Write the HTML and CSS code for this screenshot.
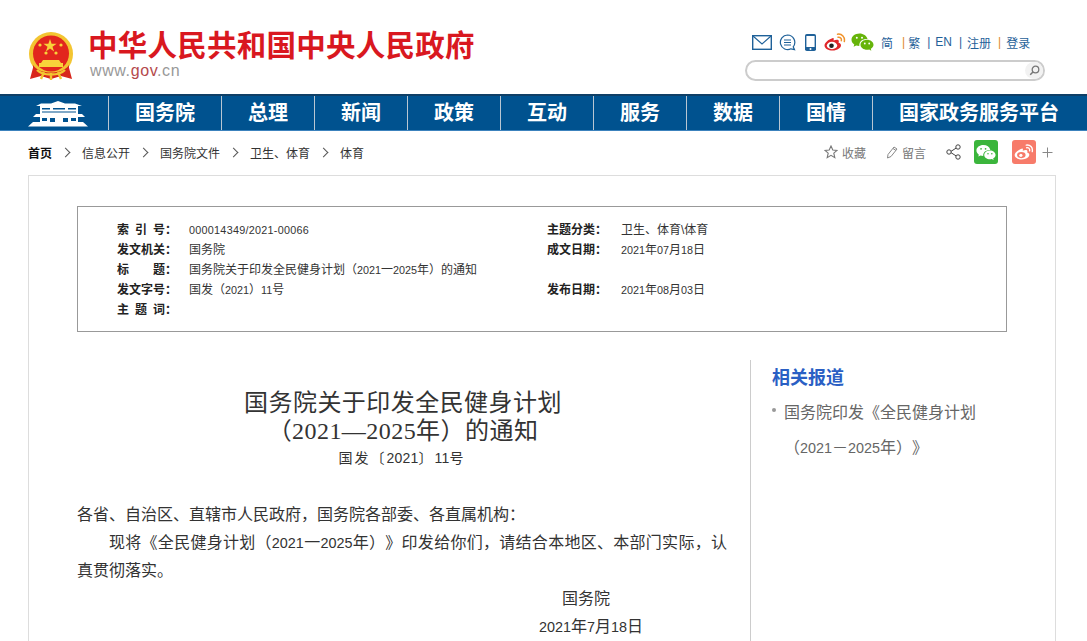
FILE: index.html
```html
<!DOCTYPE html>
<html lang="zh-CN">
<head>
  <meta charset="UTF-8">
  <title>国务院关于印发全民健身计划（2021—2025年）的通知</title>
  <link rel="stylesheet" href="styles.css">
</head>
<body>
  <div class="header">
    <div class="brand">
      <svg class="emblem" width="44" height="48" viewBox="0 0 44 48">
        <path d="M5 32 L1 47 L12 44 L22 47 L32 44 L43 47 L39 32 Z" fill="#d8261c"/>
        <circle cx="22" cy="22" r="22" fill="#f3c531"/>
        <circle cx="22" cy="21.5" r="18" fill="#e2261d"/>
        <polygon points="21,7 22.6,11.8 27.6,11.8 23.5,14.8 25.1,19.6 21,16.6 16.9,19.6 18.5,14.8 14.4,11.8 19.4,11.8" fill="#f8d33a"/>
        <circle cx="11" cy="13" r="1.6" fill="#f8d33a"/>
        <circle cx="32" cy="13" r="1.6" fill="#f8d33a"/>
        <circle cx="17" cy="21" r="1.6" fill="#f8d33a"/>
        <circle cx="27" cy="21" r="1.6" fill="#f8d33a"/>
        <path d="M14 28 L30 28 L32 31 L34 31 L34 35 L10 35 L10 31 L12 31 Z" fill="#f8d33a"/>
        <path d="M4 33 C10 43 34 43 40 33 L40 40 C32 47 12 47 4 40 Z" fill="#d8261c"/>
        <path d="M8 38 C14 44 30 44 36 38 M12 47 L15 40 M32 47 L29 40 M22 41 L22 48" stroke="#f3c531" stroke-width="2.4" fill="none"/>
      </svg>
      <div class="brand-text">
        <div class="site-name">中华人民共和国中央人民政府</div>
        <div class="site-url">www.<span class="url-red">gov</span>.cn</div>
      </div>
    </div>
    <div class="tools">
      <div class="tool-row">
        <svg class="icon-mail" width="20" height="15" viewBox="0 0 20 15">
          <rect x="0.7" y="0.7" width="18.6" height="13.6" fill="#fff" stroke="#1f6199" stroke-width="1.4"/>
          <path d="M1 1 L10 9 L19 1" fill="none" stroke="#1f6199" stroke-width="1.1"/>
        </svg>
        <svg class="icon-msg" width="17" height="17" viewBox="0 0 17 17">
          <path d="M8.5 1 A7.3 7.3 0 1 0 12 14.8 L15.5 15.6 L14.2 12.8 A7.3 7.3 0 0 0 8.5 1 Z" fill="none" stroke="#1f6199" stroke-width="1.2"/>
          <path d="M5 6 H12 M5 8.5 H12 M5 11 H12" stroke="#1f6199" stroke-width="1"/>
        </svg>
        <svg class="icon-phone" width="11" height="17" viewBox="0 0 11 17">
          <rect x="0" y="0" width="11" height="17" rx="1.8" fill="#1f6199"/>
          <rect x="1.4" y="2" width="8.2" height="11" fill="#fff"/>
          <circle cx="5.5" cy="15" r="1" fill="#fff"/>
        </svg>
        <svg class="icon-weibo" width="22" height="18" viewBox="0 0 22 18">
          <path d="M9 5 C4 6.500 0.500 10 0.500 12.500 C0.500 15.500 4.500 17.500 8.500 17.500 C13.500 17.500 17 14.800 17 12.200 C17 10.500 15.500 10 14.500 9.700 C15 8.500 15 7.400 14.200 6.900 C13 6.300 11 7 9.500 7.600 C10 6 9.800 4.800 9 5 Z" fill="#e0262a"/>
          <ellipse cx="8" cy="12.500" rx="5.200" ry="3.700" fill="#fff"/>
          <circle cx="7.500" cy="12.700" r="2.300" fill="#222"/>
          <path d="M13.500 1.200 C18 0.500 21.200 4 20.300 8.500 M14 4.200 C16.300 3.800 17.800 5.500 17.300 7.700" fill="none" stroke="#f0932b" stroke-width="1.500" stroke-linecap="round"/>
        </svg>
        <svg class="icon-wechat" width="23" height="18" viewBox="0 0 23 18">
          <path d="M8.500 0.500 C4 0.500 0.500 3.300 0.500 6.800 C0.500 8.800 1.600 10.400 3.300 11.500 L2.600 13.700 L5.200 12.400 C6.200 12.700 7.200 12.900 8.300 12.900 C8 8.500 11.500 5.800 16.500 6 C15.600 2.800 12.400 0.500 8.500 0.500 Z" fill="#66b40a"/>
          <path d="M16 6.800 C12.500 6.800 9.500 9 9.500 11.800 C9.500 14.600 12.500 16.800 16 16.800 C16.800 16.800 17.500 16.700 18.200 16.500 L20.300 17.700 L19.800 15.700 C21.400 14.800 22.500 13.400 22.500 11.800 C22.500 9 19.500 6.800 16 6.800 Z" fill="#66b40a"/>
          <circle cx="5.800" cy="4.800" r="1" fill="#fff"/><circle cx="11" cy="4.800" r="1" fill="#fff"/>
          <circle cx="13.800" cy="10.500" r="0.900" fill="#fff"/><circle cx="18.200" cy="10.500" r="0.900" fill="#fff"/>
        </svg>
        <div class="lang-links">
          <a>简</a><i class="sep-o sep-first">|</i><a>繁</a><i class="sep-b">|</i><a>EN</a><i class="sep-b">|</i><a>注册</a><i class="sep-o">|</i><a>登录</a>
        </div>
      </div>
      <div class="search-box">
        <span class="search-btn">
          <svg width="11" height="11" viewBox="0 0 11 11">
            <circle cx="6.500" cy="4.500" r="3.300" fill="none" stroke="#777" stroke-width="1.300"/>
            <path d="M4 7 L1.200 9.800" stroke="#777" stroke-width="1.500"/>
          </svg>
        </span>
      </div>
    </div>
  </div>

  <div class="nav">
    <div class="nav-home">
      <svg width="62" height="26" viewBox="0 0 62 26">
        <path d="M9 5 L14 2.500 H24 L31 0 L38 2.500 H48 L55 5 Z" fill="#fff"/>
        <path d="M13 5 H51 V13 H13 Z" fill="#fff"/>
        <path d="M15 7 H23 V8.500 H15 Z M26 7 H38 V8.500 H26 Z M41 7 H49 V8.500 H41 Z M15 10.500 H49 V11.500 H15 Z" fill="#00528f"/>
        <path d="M9 13 H55 L58 16 H6 Z" fill="#fff"/>
        <path d="M13 16 H51 V21 H13 Z" fill="#fff"/>
        <path d="M15 17 H20 V20 H15 Z M23 17 H28 V21 H23 Z M36 17 H41 V21 H36 Z M44 17 H49 V20 H44 Z" fill="#00528f"/>
        <path d="M6 21 H56 L61 25.500 H1 Z" fill="#fff"/>
      </svg>
    </div>
    <a class="nav-item">国务院</a>
    <a class="nav-item">总理</a>
    <a class="nav-item">新闻</a>
    <a class="nav-item">政策</a>
    <a class="nav-item">互动</a>
    <a class="nav-item">服务</a>
    <a class="nav-item">数据</a>
    <a class="nav-item">国情</a>
    <a class="nav-item nav-last">国家政务服务平台</a>
  </div>

  <div class="crumb-bar">
    <div class="crumbs">
      <a class="crumb-home">首页</a><span class="chev"></span>
      <a>信息公开</a><span class="chev"></span>
      <a>国务院文件</a><span class="chev"></span>
      <a>卫生、体育</a><span class="chev"></span>
      <a>体育</a>
    </div>
    <div class="actions">
      <svg class="act-star" width="14" height="14" viewBox="0 0 14 14">
        <polygon points="7,1 8.800,5 13,5.400 9.800,8.200 10.800,12.600 7,10.300 3.200,12.600 4.200,8.200 1,5.400 5.200,5" fill="none" stroke="#777" stroke-width="1.100"/>
      </svg>
      <span class="act-text">收藏</span>
      <svg class="act-pen" width="12" height="13" viewBox="0 0 12 13">
        <path d="M1.500 12 L2 8.500 L8 1 L11 3 L5 10.500 Z M7 2.500 L10 4.500" fill="none" stroke="#888" stroke-width="1"/>
      </svg>
      <span class="act-text">留言</span>
      <svg class="act-share" width="15" height="16" viewBox="0 0 15 16">
        <path d="M4 8 L11 3.500 M4 8 L11 12.500" stroke="#444" stroke-width="1"/>
        <circle cx="3" cy="8" r="2.200" fill="#fff" stroke="#444" stroke-width="1"/>
        <circle cx="12" cy="3" r="2.200" fill="#fff" stroke="#444" stroke-width="1"/>
        <circle cx="12" cy="13" r="2.200" fill="#fff" stroke="#444" stroke-width="1"/>
      </svg>
      <span class="share-tile tile-wechat">
        <svg width="20" height="17" viewBox="0 0 23 18">
          <path d="M8.500 0.500 C4 0.500 0.500 3.300 0.500 6.800 C0.500 8.800 1.600 10.400 3.300 11.500 L2.600 13.700 L5.200 12.400 C6.200 12.700 7.200 12.900 8.300 12.900 C8 8.500 11.500 5.800 16.500 6 C15.600 2.800 12.400 0.500 8.500 0.500 Z" fill="#fff"/>
          <path d="M16 6.800 C12.500 6.800 9.500 9 9.500 11.800 C9.500 14.600 12.500 16.800 16 16.800 C16.800 16.800 17.500 16.700 18.200 16.500 L20.300 17.700 L19.800 15.700 C21.400 14.800 22.500 13.400 22.500 11.800 C22.500 9 19.500 6.800 16 6.800 Z" fill="#fff"/>
          <circle cx="5.800" cy="4.800" r="1" fill="#3bb53c"/><circle cx="11" cy="4.800" r="1" fill="#3bb53c"/>
          <circle cx="13.800" cy="10.500" r="0.900" fill="#3bb53c"/><circle cx="18.200" cy="10.500" r="0.900" fill="#3bb53c"/>
        </svg>
      </span>
      <span class="share-tile tile-weibo">
        <svg width="20" height="16" viewBox="0 0 22 18">
          <path d="M9 5 C4 6.500 0.500 10 0.500 12.500 C0.500 15.500 4.500 17.500 8.500 17.500 C13.500 17.500 17 14.800 17 12.200 C17 10.500 15.500 10 14.500 9.700 C15 8.500 15 7.400 14.200 6.900 C13 6.300 11 7 9.500 7.600 C10 6 9.800 4.800 9 5 Z" fill="#fff"/>
          <ellipse cx="8" cy="12.500" rx="4.800" ry="3.400" fill="#f77b6a"/>
          <circle cx="7.500" cy="12.700" r="1.800" fill="#fff"/>
          <path d="M13.500 1.200 C18 0.500 21.200 4 20.300 8.500 M14 4.200 C16.300 3.800 17.800 5.500 17.300 7.700" fill="none" stroke="#fff" stroke-width="1.500" stroke-linecap="round"/>
        </svg>
      </span>
      <svg class="act-plus" width="11" height="11" viewBox="0 0 11 11">
        <path d="M5.500 0.500 V10.500 M0.500 5.500 H10.500" stroke="#888" stroke-width="1"/>
      </svg>
    </div>
  </div>

  <div class="panel">
    <div class="info-box">
      <div class="info-label"><span class="just">索引号</span>：</div><div class="info-val"><span class="num idx">000014349/2021-00066</span></div>
      <div class="info-label">主题分类：</div><div class="info-val">卫生、体育\体育</div>
      <div class="info-label">发文机关：</div><div class="info-val">国务院</div>
      <div class="info-label">成文日期：</div><div class="info-val"><span class="num">2021</span>年<span class="num">07</span>月<span class="num">18</span>日</div>
      <div class="info-label"><span class="just">标题</span>：</div><div class="info-val info-wide">国务院关于印发全民健身计划（<span class="num">2021</span>一<span class="num">2025</span>年）的通知</div>
      <div class="info-label">发文字号：</div><div class="info-val">国发（<span class="num">2021</span>）<span class="num">11</span>号</div>
      <div class="info-label">发布日期：</div><div class="info-val"><span class="num">2021</span>年<span class="num">08</span>月<span class="num">03</span>日</div>
      <div class="info-label"><span class="just">主题词</span>：</div><div class="info-val info-wide"></div>
    </div>

    <div class="content">
      <div class="article">
        <h1 class="article-title">国务院关于印发全民健身计划<br>（2021—2025年）的通知</h1>
        <p class="doc-no">国发〔<span class="doc-num">2021</span>〕<span class="doc-num">11</span>号</p>
        <p class="para">各省、自治区、直辖市人民政府，国务院各部委、各直属机构：</p>
        <p class="para">
          <span class="line-full">现将《全民健身计划（<span class="num">2021</span>一<span class="num">2025</span>年）》印发给你们，请结合本地区、本部门实际，认</span>
          <span class="line-rest">真贯彻落实。</span>
        </p>
        <p class="para sign">国务院</p>
        <p class="para date"><span class="num">2021</span>年<span class="num">7</span>月<span class="num">18</span>日</p>
      </div>
      <div class="aside">
        <h2 class="aside-title">相关报道</h2>
        <p class="aside-item">国务院印发《全民健身计划<br>（<span class="num">2021</span>－<span class="num">2025</span>年）》</p>
      </div>
    </div>
  </div>
</body>
</html>
```

FILE: styles.css
```css
* {
  box-sizing: border-box;
  margin: 0;
  padding: 0;
}

html, body {
  height: 641px;
  overflow: hidden;
}

body {
  font-family: "Liberation Sans", "Noto Sans CJK SC", sans-serif;
  background-color: #fff;
  color: #333;
  text-spacing-trim: space-all;
}

.header {
  display: flex;
  justify-content: space-between;
  height: 94px;
  padding: 32px 42px 0 29px;
}

.brand {
  display: flex;
}

.emblem {
  margin-right: 15px;
}

.site-name {
  font-size: 29.5px;
  font-weight: 700;
  line-height: 28px;
  letter-spacing: 0.25px;
  color: #d9181f;
}

.site-url {
  margin-top: 1px;
  margin-left: 2px;
  font-size: 16px;
  line-height: 20px;
  color: #999;
  letter-spacing: 0.6px;
}

.url-red {
  color: #b4494c;
}

.tools {
  width: 300px;
  margin-top: 1px;
}

.tool-row {
  display: flex;
  align-items: center;
  height: 18px;
  padding-left: 7px;
  white-space: nowrap;
}

.icon-msg { margin-left: 7px; }
.icon-phone { margin-left: 9px; }
.icon-weibo { margin-left: 8px; }
.icon-wechat { margin-left: 5px; }

.lang-links {
  display: flex;
  align-items: center;
  margin-left: 7px;
  font-size: 12px;
  color: #1f6199;
}

.lang-links i {
  font-style: normal;
  margin: 0 5px 0 7px;
}

.lang-links .sep-first { margin: 0 3px 0 9px; }
.lang-links .sep-o { color: #e08a2c; }
.lang-links .sep-b { color: #1f6199; }

.search-box {
  display: flex;
  justify-content: flex-end;
  align-items: center;
  width: 300px;
  height: 21px;
  margin-top: 9px;
  border: 2px solid #ccc;
  border-radius: 11px;
}

.search-btn {
  display: flex;
  align-items: center;
  justify-content: center;
  width: 18px;
  height: 17px;
  border-radius: 50%;
  background-color: #f2f2f2;
}

.nav {
  display: flex;
  height: 37px;
  background-color: #00528f;
  border-top: 2px solid #0f3f66;
  border-bottom: 1px solid #3c82bd;
}

.nav-home {
  display: flex;
  align-items: center;
  width: 108px;
  padding: 2px 0 0 27px;
}

.nav-item {
  flex: 0 0 93px;
  border-left: 1px solid #b9c6d2;
  font-size: 20px;
  font-weight: 700;
  line-height: 34px;
  color: #fff;
  text-align: center;
}

.nav-item:first-of-type {
  flex-basis: 113px;
}

.nav-last {
  flex: 1;
  padding-right: 2px;
}

.crumb-bar {
  display: flex;
  justify-content: space-between;
  align-items: center;
  height: 44px;
  padding: 0 34px 2px 28px;
}

.crumbs {
  display: flex;
  align-items: center;
  font-size: 12px;
  color: #333;
}

.crumb-home {
  font-weight: 700;
  color: #111;
}

.chev {
  width: 7px;
  height: 7px;
  margin: 0 13px 0 10px;
  border-top: 1px solid #555;
  border-right: 1px solid #555;
  transform: rotate(45deg);
}

.actions {
  display: flex;
  align-items: center;
}

.act-text {
  margin-left: 4px;
  font-size: 12px;
  color: #777;
}

.act-pen { margin-left: 20px; }
.act-share { margin: 0 13px 0 20px; }

.share-tile {
  display: flex;
  align-items: center;
  justify-content: center;
  width: 24px;
  height: 24px;
  border-radius: 3px;
}

.tile-wechat { background-color: #3bb53c; }
.tile-weibo { background-color: #f77b6a; margin-left: 14px; }
.act-plus { margin-left: 6px; }

.panel {
  height: 480px;
  margin: 0 31px 0 28px;
  padding: 30px 48px 0;
  border: 1px solid #ddd;
  border-bottom: none;
}

.info-box {
  display: grid;
  grid-template-columns: 72px 358px 74px 1fr;
  grid-auto-rows: 20px;
  align-content: start;
  height: 126px;
  padding: 13px 39px 0;
  border: 1px solid #999;
  font-size: 12px;
  line-height: 20px;
  color: #333;
}

.num {
  font-size: 0.9em;
}

.idx {
  letter-spacing: 0.27px;
}

.info-label {
  display: flex;
  font-weight: 700;
  color: #222;
}

.just {
  width: 48px;
  text-align: justify;
  text-align-last: justify;
}

.info-wide {
  grid-column: 2 / 5;
}

.content {
  display: flex;
  margin-top: 28px;
}

.article {
  width: 650px;
  padding-top: 29px;
  margin-right: 23px;
}

.article-title {
  font-family: "Liberation Serif", "Noto Sans CJK SC", serif;
  padding-left: 2px;
  font-size: 24px;
  font-weight: 400;
  line-height: 28px;
  letter-spacing: 0.45px;
  color: #333;
  text-align: center;
}

.doc-no {
  margin-top: -1px;
  margin-bottom: 29px;
  font-size: 14px;
  line-height: 28px;
  letter-spacing: 2px;
  text-align: center;
}

.doc-num {
  letter-spacing: 0.2px;
}

.para {
  font-size: 16px;
  line-height: 28px;
  color: #333;
}

.line-full {
  display: block;
  padding-left: 32px;
  text-align-last: justify;
}

.line-rest {
  display: block;
}

.sign {
  padding-left: 485px;
}

.date {
  padding-left: 462px;
}

.aside {
  flex: 1;
  height: 300px;
  padding: 5px 0 0 21px;
  border-left: 1px solid #ccc;
}

.aside-title {
  font-size: 18px;
  font-weight: 700;
  line-height: 26px;
  color: #2a5fc4;
}

.aside-item {
  position: relative;
  margin-top: 4px;
  padding-left: 12px;
  font-size: 16px;
  line-height: 35px;
  color: #666;
}

.aside-item::before {
  content: "";
  position: absolute;
  left: 0;
  top: 13px;
  width: 4px;
  height: 4px;
  border-radius: 50%;
  background-color: #999;
}
```
